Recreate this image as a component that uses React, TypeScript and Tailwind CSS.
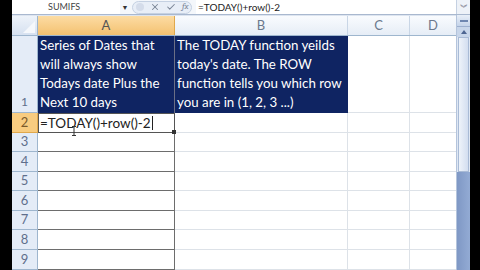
import { Check, X } from "lucide-react";

const font = { fontFamily: "Lato, 'Open Sans', sans-serif" };

const rowHeights = [20, 19, 20, 19, 20, 19, 20, 20];

function FormulaBar() {
  return (
    <div className="flex h-[15px] items-center border-b border-[#a9b8cf] bg-[#f4f7fb] text-[#333]">
      <div className="flex h-full w-[108px] items-center bg-white pl-[36px] text-[9px] text-[#444]">
        SUMIFS
      </div>
      <div className="flex w-[10px] justify-center text-[7px] text-[#333]">▼</div>
      <div className="ml-[2px] flex h-[13px] w-[60px] items-center gap-[6px] rounded-full border border-[#c5d1e2] bg-[#e8eef7] pl-[3px]">
        <div className="h-[8px] w-[8px] rounded-full bg-[#d4dcea]" />
        <X size={10} strokeWidth={2.5} className="text-[#7a8596]" />
        <Check size={10} strokeWidth={2.5} className="text-[#7a8596]" />
        <span className="text-[9px] italic font-serif text-[#7a8596]">fx</span>
      </div>
      <div className="ml-[4px] flex h-full flex-1 items-center bg-white pl-[2px] text-[10px] text-[#222]">
        =TODAY()+row()-2
      </div>
      <div className="flex h-full w-[14px] items-center justify-center border-l border-[#c5d1e2] bg-[#eef2f8] text-[8px] text-[#667]">
        ︾
      </div>
    </div>
  );
}

function HeaderRow() {
  return (
    <div className="flex h-[20px] border-b border-[#9eb6ce]">
      <div className="relative w-[26px] border-r border-[#9eb6ce] bg-gradient-to-b from-[#eef3fa] to-[#d6e1f0]">
        <div className="absolute bottom-[2px] right-[2px] h-0 w-0 border-b-[12px] border-l-[12px] border-b-[#f5f8fc] border-l-transparent" />
      </div>
      <div className="flex w-[137px] items-center justify-center border-r border-[#e0a84c] bg-gradient-to-b from-[#fcdca3] to-[#f4c170] text-[13px] text-[#555]">
        A
      </div>
      <div className="flex w-[173px] items-center justify-center border-r border-[#c9d6e6] bg-gradient-to-b from-[#f9fbfe] to-[#e6edf6] text-[13px] text-[#6b788c]">
        B
      </div>
      <div className="flex w-[62px] items-center justify-center border-r border-[#c9d6e6] bg-gradient-to-b from-[#f9fbfe] to-[#e6edf6] text-[13px] text-[#6b788c]">
        C
      </div>
      <div className="flex w-[46px] items-center justify-center bg-gradient-to-b from-[#f9fbfe] to-[#e6edf6] text-[13px] text-[#6b788c]">
        D
      </div>
    </div>
  );
}

function RowOne() {
  return (
    <div className="flex h-[77px]">
      <div className="flex w-[26px] items-end justify-center border-r border-b border-[#9eb6ce] bg-[#e4ecf7] pb-[1px] text-[12px] text-[#5f6f8c]">
        1
      </div>
      <div className="flex w-[137px] items-end border-r border-[#6a6f86] bg-[#0f2462] pb-[1px] pl-[2px] text-[13.3px] leading-[19px] text-white">
        Series of Dates that will always show Todays date Plus the Next 10 days
      </div>
      <div className="flex w-[173px] items-end bg-[#0f2462] pb-[1px] pl-[2px] text-[13.3px] leading-[19px] text-white">
        The TODAY function yeilds today's date. The ROW function tells you which row you are in (1, 2, 3 ...)
      </div>
      <div className="w-[62px] border-r border-b border-[#dde2e8] bg-white" />
      <div className="w-[46px] border-b border-[#dde2e8] bg-white" />
    </div>
  );
}

function BodyRow({ n, h }: { n: number; h: number }) {
  const active = n === 2;
  return (
    <div className="flex" style={{ height: h }}>
      <div
        className={
          active
            ? "flex w-[26px] items-center justify-center border-r border-b border-[#e0a84c] bg-[#f8cc80] text-[13px] text-[#7a5a2a]"
            : "flex w-[26px] items-center justify-center border-r border-b border-[#9eb6ce] bg-[#e4ecf7] text-[13px] text-[#5f6f8c]"
        }
      >
        {n}
      </div>
      {active ? (
        <div className="relative flex w-[137px] items-center border border-[#555] bg-white pl-[1px] text-[13.5px] text-[#222]">
          =TODAY()+row()-2
          <span className="ml-[1px] h-[14px] w-px bg-[#222]" />
          <svg className="absolute left-[32px] top-[12px]" width="6" height="10" viewBox="0 0 6 10">
            <path d="M1 0.5h4M3 0.5v9M1 9.5h4" stroke="#333" strokeWidth="1" fill="none" />
          </svg>
          <div className="absolute -bottom-[2px] -right-[2px] h-[4px] w-[4px] bg-[#333]" />
        </div>
      ) : (
        <div className="w-[137px] border-r border-b border-[#6d6d6d] bg-white" />
      )}
      <div className="w-[173px] border-r border-b border-[#dde2e8] bg-white" />
      <div className="w-[62px] border-r border-b border-[#dde2e8] bg-white" />
      <div className="w-[46px] border-b border-[#dde2e8] bg-white" />
    </div>
  );
}

function ScrollBar() {
  return (
    <div className="flex w-[14px] flex-col border-l border-[#b4c4dc] bg-[#dfe7f3]">
      <div className="flex h-[12px] items-center justify-center border-b border-[#9db0cf] bg-gradient-to-b from-[#e9eff8] to-[#c5d4ea]">
        <div className="h-[2px] w-[8px] bg-[#6e86b0]" />
      </div>
      <div className="flex h-[10px] items-center justify-center bg-[#c8d6ea]">
        <div className="h-0 w-0 border-x-[3px] border-b-[4px] border-x-transparent border-b-[#4d6591]" />
      </div>
      <div className="mx-[1px] h-[135px] border border-[#a9bbd6] bg-gradient-to-r from-[#eef3fa] to-[#d3def0]" />
      <div className="flex-1 bg-gradient-to-r from-[#7f98c5] to-[#93abd4]" />
    </div>
  );
}

export default function App() {
  return (
    <div className="flex h-[270px] w-[480px] overflow-hidden bg-black" style={font}>
      <div className="w-[12px] bg-black" />
      <div className="flex w-[458px] flex-col bg-white">
        <FormulaBar />
        <div className="flex flex-1">
          <div className="flex w-[444px] flex-col">
            <div className="h-[1px] bg-[#dde5f0]" />
            <HeaderRow />
            <RowOne />
            {rowHeights.map((h, i) => (
              <BodyRow key={i} n={i + 2} h={h} />
            ))}
          </div>
          <ScrollBar />
        </div>
      </div>
      <div className="w-[10px] bg-black" />
    </div>
  );
}
